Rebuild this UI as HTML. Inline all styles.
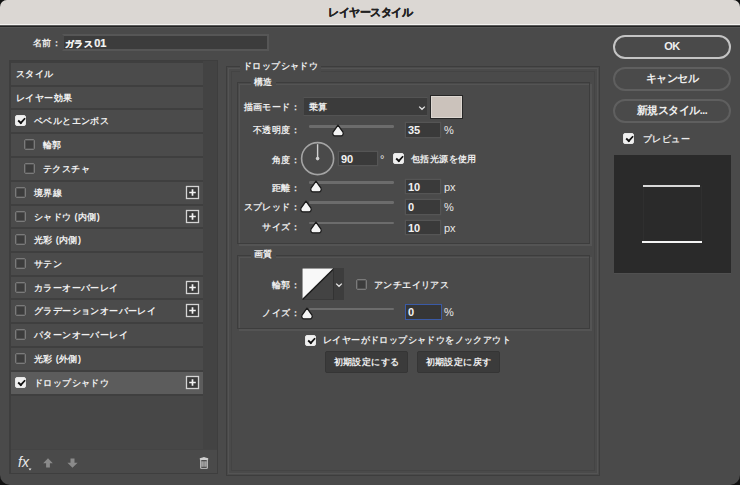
<!DOCTYPE html>
<html lang="ja"><head><meta charset="utf-8">
<style>
*{box-sizing:border-box;margin:0;padding:0}
html,body{width:740px;height:485px;overflow:hidden;background:#111}
body{position:relative;font-family:"Liberation Sans",sans-serif;color:#e6e6e6;font-size:10.5px}
.abs{position:absolute}
#dlg{position:absolute;left:0;top:0;width:740px;height:485px;background:#4a4a4a;border-radius:7px 7px 10px 10px;overflow:hidden}
#title{position:absolute;left:0;top:0;width:740px;height:25px;background:#dbd7d3;border-bottom:1px solid #f4f2f0}
#title span{position:absolute;left:0;width:740px;top:5px;text-align:center;color:#222;font-weight:bold;font-size:11px;letter-spacing:-0.5px;-webkit-text-stroke:0.3px #222}
#tline{position:absolute;left:0;top:25px;width:740px;height:3px;background:linear-gradient(#5a5a5a 0 1px,#222 1px 2px,#555 2px 3px)}
.t{position:absolute;white-space:nowrap;line-height:12px}
.inp{position:absolute;background:#3c3c3c;border:2px solid #565656;border-left-color:#4a4a4a}
/* left panel */
#lp{position:absolute;left:9px;top:60px;width:209px;height:414px;border:2px solid #3e3e3e;background:#474747}
.row{position:absolute;left:11px;width:192px;background:#4b4b4b;border-top:2px solid #3f3f3f}
.row.sel{background:#5c5c5c}
.lt{position:absolute;top:5px;white-space:nowrap;line-height:12px;letter-spacing:0.4px;font-weight:bold;font-size:9px;color:#f0f0f0}
.cb{position:absolute;top:5px;width:11px;height:11px;border:1px solid #7a7a7a;border-radius:2px;background:#3c3c3c;box-shadow:inset 0 0 0 1px #525252}
.cb.on{background:#f0f0f0;border-color:#e6e6e6;box-shadow:none}
.cb.on::after{content:"";position:absolute;left:2.6px;top:0.2px;width:3.2px;height:6.4px;border-right:2px solid #111;border-bottom:2px solid #111;transform:rotate(42deg) scale(0.9)}
.plus{position:absolute;left:174px;top:3px;width:15px;height:15px}
#sb{position:absolute;left:203px;top:61px;width:14px;height:388px;background:#434343}
#lbar{position:absolute;left:11px;top:449px;width:206px;height:24px;background:#4a4a4a;border-top:1px solid #444}
/* groups */
.grp{position:absolute;border:1px solid #3d3d3d;box-shadow:inset 1px 1px 0 0 #4a4a4a, inset 2px 2px 0 0 #545454, 2px 2px 0 0 #545454}
.ogrp{position:absolute;border:1px solid #3d3d3d;box-shadow:inset 0 0 0 1px #4a4a4a, inset 0 0 0 2px #545454, inset 0 0 0 4px #4a4a4a, inset 0 0 0 5px #444}
.gt{position:absolute;background:#4a4a4a;padding:0 3px;white-space:nowrap;line-height:12px;font-weight:bold;letter-spacing:0.4px;font-size:9px;color:#f0f0f0}
.slider{position:absolute;height:2.5px;background:#6c6c6c;border-radius:1.25px}
.thumb{position:absolute;width:0;height:0}
.btn{position:absolute;border:2px solid #5f5f5f;border-radius:12px;text-align:center;line-height:18px;color:#f0f0f0;font-weight:bold;letter-spacing:-0.5px}
.sbtn{position:absolute;background:#3b3b3b;border:1px solid #353535;border-radius:2px;text-align:center;color:#eeeeee;line-height:20px;letter-spacing:0.4px;font-size:9px;font-weight:bold}
.lab{font-weight:bold;letter-spacing:0.4px;font-size:9px;color:#ececec}
.num{font-weight:bold;font-size:11px;letter-spacing:0;color:#f2f2f2}
.unit{font-weight:normal;font-size:11px;color:#e8e8e8}
.ninp{position:absolute;background:#3a3a3a;border:1px solid #555;box-shadow:0 0 0 0.5px #4e4e4e}
.dd{position:absolute;background:#3b3b3b;border:1px solid #535353;border-left-color:#4a4a4a;border-right-color:#4a4a4a}
</style></head><body>
<div id="dlg">
<div id="title"><span>レイヤースタイル</span></div>
<div id="tline"></div>

<div class="t lab" style="left:33px;top:37px">名前：</div>
<div class="inp" style="left:62px;top:34px;width:207px;height:17px"></div>
<div class="t lab" style="left:65px;top:37px;color:#f4f4f4;-webkit-text-stroke:0.2px #f4f4f4">ガラス<span style="font-size:11px;letter-spacing:0;margin-left:1px">01</span></div>

<div id="lp"></div>
<div class="row" style="top:61px;height:24px"><span class="lt" style="left:5px">スタイル</span></div>
<div class="row" style="top:85px;height:23px"><span class="lt" style="left:5px">レイヤー効果</span></div>
<div class="row" style="top:108px;height:24px"><i class="cb on" style="left:4px"></i><span class="lt" style="left:23px">ベベルとエンボス</span></div>
<div class="row" style="top:132px;height:24px"><i class="cb" style="left:13px"></i><span class="lt" style="left:32px">輪郭</span></div>
<div class="row" style="top:156px;height:24px"><i class="cb" style="left:13px"></i><span class="lt" style="left:32px">テクスチャ</span></div>
<div class="row" style="top:180px;height:24px"><i class="cb" style="left:4px"></i><span class="lt" style="left:23px">境界線</span><svg class="plus" width="15" height="15" viewBox="0 0 15 15"><rect x="1.5" y="1.5" width="12" height="12" fill="#3a3a3a" stroke="#d4d4d4" stroke-width="1.3"/><path d="M7.5 4.2 V10.8 M4.2 7.5 H10.8" stroke="#f2f2f2" stroke-width="1.7"/></svg></div>
<div class="row" style="top:204px;height:23px"><i class="cb" style="left:4px"></i><span class="lt" style="left:23px">シャドウ (内側)</span><svg class="plus" width="15" height="15" viewBox="0 0 15 15"><rect x="1.5" y="1.5" width="12" height="12" fill="#3a3a3a" stroke="#d4d4d4" stroke-width="1.3"/><path d="M7.5 4.2 V10.8 M4.2 7.5 H10.8" stroke="#f2f2f2" stroke-width="1.7"/></svg></div>
<div class="row" style="top:227px;height:24px"><i class="cb" style="left:4px"></i><span class="lt" style="left:23px">光彩 (内側)</span></div>
<div class="row" style="top:251px;height:24px"><i class="cb" style="left:4px"></i><span class="lt" style="left:23px">サテン</span></div>
<div class="row" style="top:275px;height:23px"><i class="cb" style="left:4px"></i><span class="lt" style="left:23px">カラーオーバーレイ</span><svg class="plus" width="15" height="15" viewBox="0 0 15 15"><rect x="1.5" y="1.5" width="12" height="12" fill="#3a3a3a" stroke="#d4d4d4" stroke-width="1.3"/><path d="M7.5 4.2 V10.8 M4.2 7.5 H10.8" stroke="#f2f2f2" stroke-width="1.7"/></svg></div>
<div class="row" style="top:298px;height:24px"><i class="cb" style="left:4px"></i><span class="lt" style="left:23px">グラデーションオーバーレイ</span><svg class="plus" width="15" height="15" viewBox="0 0 15 15"><rect x="1.5" y="1.5" width="12" height="12" fill="#3a3a3a" stroke="#d4d4d4" stroke-width="1.3"/><path d="M7.5 4.2 V10.8 M4.2 7.5 H10.8" stroke="#f2f2f2" stroke-width="1.7"/></svg></div>
<div class="row" style="top:322px;height:24px"><i class="cb" style="left:4px"></i><span class="lt" style="left:23px">パターンオーバーレイ</span></div>
<div class="row" style="top:346px;height:24px"><i class="cb" style="left:4px"></i><span class="lt" style="left:23px">光彩 (外側)</span></div>
<div class="row sel" style="top:370px;height:24px"><i class="cb on" style="left:4px"></i><span class="lt" style="left:23px">ドロップシャドウ</span><svg class="plus" width="15" height="15" viewBox="0 0 15 15"><rect x="1.5" y="1.5" width="12" height="12" fill="#3a3a3a" stroke="#d4d4d4" stroke-width="1.3"/><path d="M7.5 4.2 V10.8 M4.2 7.5 H10.8" stroke="#f2f2f2" stroke-width="1.7"/></svg></div>
<div id="sb"></div>
<div class="abs" style="left:11px;top:394px;width:192px;height:2px;background:#3f3f3f"></div>
<div id="lbar"></div>
<div class="t" style="left:18px;top:455px;font-style:italic;font-size:14px;line-height:15px;color:#e8e8e8;letter-spacing:0px">fx</div>
<svg class="abs" style="left:28px;top:467px" width="4" height="4" viewBox="0 0 4 4"><path d="M0.5 1.5 L3.5 1.5 L2 3.5 Z" fill="#e8e8e8"/></svg>
<svg class="abs" style="left:43px;top:458px" width="10" height="10" viewBox="0 0 10 10"><path d="M5 0.3 L9.8 5.2 L6.9 5.2 L6.9 9.6 L3.1 9.6 L3.1 5.2 L0.2 5.2 Z" fill="#8a8a8a"/></svg>
<svg class="abs" style="left:67px;top:458px" width="11" height="10" viewBox="0 0 11 10"><path d="M5.5 9.7 L10.6 4.8 L7.5 4.8 L7.5 0.4 L3.5 0.4 L3.5 4.8 L0.4 4.8 Z" fill="#8a8a8a"/></svg>
<svg class="abs" style="left:198px;top:456px" width="12" height="14" viewBox="0 0 12 14"><path d="M4.6 1.6 Q6 0.6 7.4 1.6 L10.2 2.3 L10.2 3.4 L9.8 3.8 L9.8 12 Q9.8 12.8 9 12.8 L3 12.8 Q2.2 12.8 2.2 12 L2.2 3.8 L1.8 3.4 L1.8 2.3 Z" fill="#cfcfcf"/><rect x="3.3" y="4.3" width="5.4" height="7.3" fill="#7a7a7a"/><path d="M4.6 5 V11 M6 5 V11 M7.4 5 V11" stroke="#bdbdbd" stroke-width="0.6"/><rect x="3.3" y="4.3" width="5.4" height="0.9" fill="#333"/><rect x="3.3" y="10.8" width="5.4" height="0.9" fill="#333"/></svg>


<!-- right panel -->
<div class="ogrp" style="left:226px;top:66px;width:374px;height:410px"></div>
<div class="gt" style="left:240px;top:60px">ドロップシャドウ</div>
<div class="grp" style="left:237px;top:82px;width:353px;height:162px"></div>
<div class="gt" style="left:251px;top:76px">構造</div>
<div class="grp" style="left:237px;top:255px;width:353px;height:74px"></div>
<div class="gt" style="left:251px;top:248px">画質</div>

<div class="t lab" style="right:440px;top:101px">描画モード：</div>
<div class="dd" style="left:303px;top:97px;width:125px;height:19px"></div>
<div class="t lab" style="left:309px;top:101px">乗算</div>
<svg class="abs" style="left:418px;top:104.5px" width="8" height="6" viewBox="0 0 8 6"><path d="M1.2 1.6 L4 4.3 L6.8 1.6" fill="none" stroke="#e6e6e6" stroke-width="1.3"/></svg>
<div class="abs" style="left:430px;top:95px;width:33px;height:24px;background:#cbc2bb;border:1px solid #262626;box-shadow:inset 0 0 0 1px #dcd6d0"></div>
<div class="t lab" style="right:440px;top:124px">不透明度：</div>
<div class="slider" style="left:308.5px;top:125px;width:85px"></div><svg class="abs" style="left:330.6px;top:124.0px" width="14" height="14" viewBox="0 0 14 14"><path d="M7 1.2 L12 8.2 Q12.8 9.6 11.6 11.2 Q11.1 11.8 10.3 11.8 L3.7 11.8 Q2.9 11.8 2.4 11.2 Q1.2 9.6 2 8.2 Z" fill="#f4f4f4" stroke="#1a1a1a" stroke-width="1.3" stroke-linejoin="round"/></svg>
<div class="ninp" style="left:405px;top:122px;width:36px;height:16px"></div><div class="t num" style="left:408px;top:124px">35</div><div class="t unit" style="left:444px;top:124px">%</div>
<div class="t lab" style="right:440px;top:154px">角度：</div>
<svg class="abs" style="left:300px;top:141px" width="36" height="36" viewBox="0 0 36 36"><circle cx="17.6" cy="17.6" r="16" fill="none" stroke="#a4a4a4" stroke-width="1.6"/><line x1="17.6" y1="3.2" x2="17.6" y2="17.6" stroke="#cfcfcf" stroke-width="1.4"/><circle cx="17.6" cy="17.6" r="1.8" fill="#cfcfcf"/></svg>
<div class="ninp" style="left:338px;top:151px;width:40px;height:15px"></div>
<div class="t num" style="left:341px;top:153px">90</div>
<div class="t unit" style="left:380px;top:153px">°</div>
<i class="cb on" style="left:393px;top:153px"></i>
<div class="t lab" style="left:411px;top:153px">包括光源を使用</div>
<div class="t lab" style="right:440px;top:182px">距離：</div>
<div class="slider" style="left:308.5px;top:181px;width:85px"></div><svg class="abs" style="left:308.6px;top:180.0px" width="14" height="14" viewBox="0 0 14 14"><path d="M7 1.2 L12 8.2 Q12.8 9.6 11.6 11.2 Q11.1 11.8 10.3 11.8 L3.7 11.8 Q2.9 11.8 2.4 11.2 Q1.2 9.6 2 8.2 Z" fill="#f4f4f4" stroke="#1a1a1a" stroke-width="1.3" stroke-linejoin="round"/></svg>
<div class="ninp" style="left:405px;top:179px;width:36px;height:15px"></div><div class="t num" style="left:408px;top:181px">10</div><div class="t unit" style="left:444px;top:181px">px</div>
<div class="t lab" style="right:440px;top:201px">スプレッド：</div>
<div class="slider" style="left:308.5px;top:201px;width:85px"></div><svg class="abs" style="left:299.2px;top:200.0px" width="14" height="14" viewBox="0 0 14 14"><path d="M7 1.2 L12 8.2 Q12.8 9.6 11.6 11.2 Q11.1 11.8 10.3 11.8 L3.7 11.8 Q2.9 11.8 2.4 11.2 Q1.2 9.6 2 8.2 Z" fill="#f4f4f4" stroke="#1a1a1a" stroke-width="1.3" stroke-linejoin="round"/></svg>
<div class="ninp" style="left:405px;top:199px;width:36px;height:16px"></div><div class="t num" style="left:408px;top:201px">0</div><div class="t unit" style="left:444px;top:201px">%</div>
<div class="t lab" style="right:440px;top:221px">サイズ：</div>
<div class="slider" style="left:308.5px;top:221.5px;width:85px"></div><svg class="abs" style="left:308.6px;top:220.5px" width="14" height="14" viewBox="0 0 14 14"><path d="M7 1.2 L12 8.2 Q12.8 9.6 11.6 11.2 Q11.1 11.8 10.3 11.8 L3.7 11.8 Q2.9 11.8 2.4 11.2 Q1.2 9.6 2 8.2 Z" fill="#f4f4f4" stroke="#1a1a1a" stroke-width="1.3" stroke-linejoin="round"/></svg>
<div class="ninp" style="left:405px;top:220px;width:36px;height:15px"></div><div class="t num" style="left:408px;top:222px">10</div><div class="t unit" style="left:444px;top:222px">px</div>
<div class="t lab" style="right:440px;top:279px">輪郭：</div>
<div class="abs" style="left:302px;top:268px;width:42px;height:32px;background:#434343;border:1px solid #3a3a3a"></div>
<svg class="abs" style="left:302px;top:268px" width="33" height="32" viewBox="0 0 33 32"><path d="M0.5 0.5 L32 0.5 L0.5 31.5 Z" fill="#f8f8f8"/><line x1="32.5" y1="0" x2="0.5" y2="31.5" stroke="#1a1a1a" stroke-width="1.4"/></svg>
<div class="abs" style="left:333px;top:268px;width:11px;height:32px;background:#3d3d3d;border-left:1px solid #333"></div>
<svg class="abs" style="left:335px;top:282px" width="8" height="6" viewBox="0 0 8 6"><path d="M1.2 1.6 L4 4.3 L6.8 1.6" fill="none" stroke="#e6e6e6" stroke-width="1.3"/></svg>
<i class="cb" style="left:356px;top:279px"></i>
<div class="t lab" style="left:374px;top:279px">アンチエイリアス</div>
<div class="t lab" style="right:440px;top:307px">ノイズ：</div>
<div class="slider" style="left:308.5px;top:307.5px;width:85px"></div><svg class="abs" style="left:300.0px;top:306.5px" width="14" height="14" viewBox="0 0 14 14"><path d="M7 1.2 L12 8.2 Q12.8 9.6 11.6 11.2 Q11.1 11.8 10.3 11.8 L3.7 11.8 Q2.9 11.8 2.4 11.2 Q1.2 9.6 2 8.2 Z" fill="#f4f4f4" stroke="#1a1a1a" stroke-width="1.3" stroke-linejoin="round"/></svg>
<div class="ninp" style="left:405px;top:304px;width:37px;height:16px;border:1.5px solid #3a5aa6;background:#363636;box-shadow:none"></div>
<div class="t num" style="left:408px;top:306px">0</div>
<div class="t unit" style="left:444px;top:306px">%</div>
<i class="cb on" style="left:305px;top:335px"></i>
<div class="t lab" style="left:323px;top:334px">レイヤーがドロップシャドウをノックアウト</div>
<div class="sbtn" style="left:325px;top:351px;width:83px;height:22px">初期設定にする</div>
<div class="sbtn" style="left:417px;top:351px;width:83px;height:22px">初期設定に戻す</div>
<!-- right column -->
<div class="btn" style="left:613px;top:35px;width:118px;height:24px;border-color:#c4c4c4;font-size:11px">OK</div>
<div class="btn" style="left:613px;top:66.5px;width:118px;height:24px">キャンセル</div>
<div class="btn" style="left:613px;top:98.5px;width:118px;height:24px">新規スタイル...</div>
<i class="cb on" style="left:623px;top:133px"></i>
<div class="t lab" style="left:643px;top:133px">プレビュー</div>
<div class="abs" style="left:613.5px;top:155px;width:117px;height:117.5px;background:#2a2a2a;box-shadow:0 1px 0 #505050"></div>
<div class="abs" style="left:643px;top:186px;width:59px;height:57px;border:1px solid #2f2f2f"></div>
<div class="abs" style="left:643px;top:185px;width:57px;height:1.5px;background:#d8d8d8"></div>
<div class="abs" style="left:642px;top:241px;width:60px;height:2px;background:#f4f4f4"></div>
</div>
</body></html>
